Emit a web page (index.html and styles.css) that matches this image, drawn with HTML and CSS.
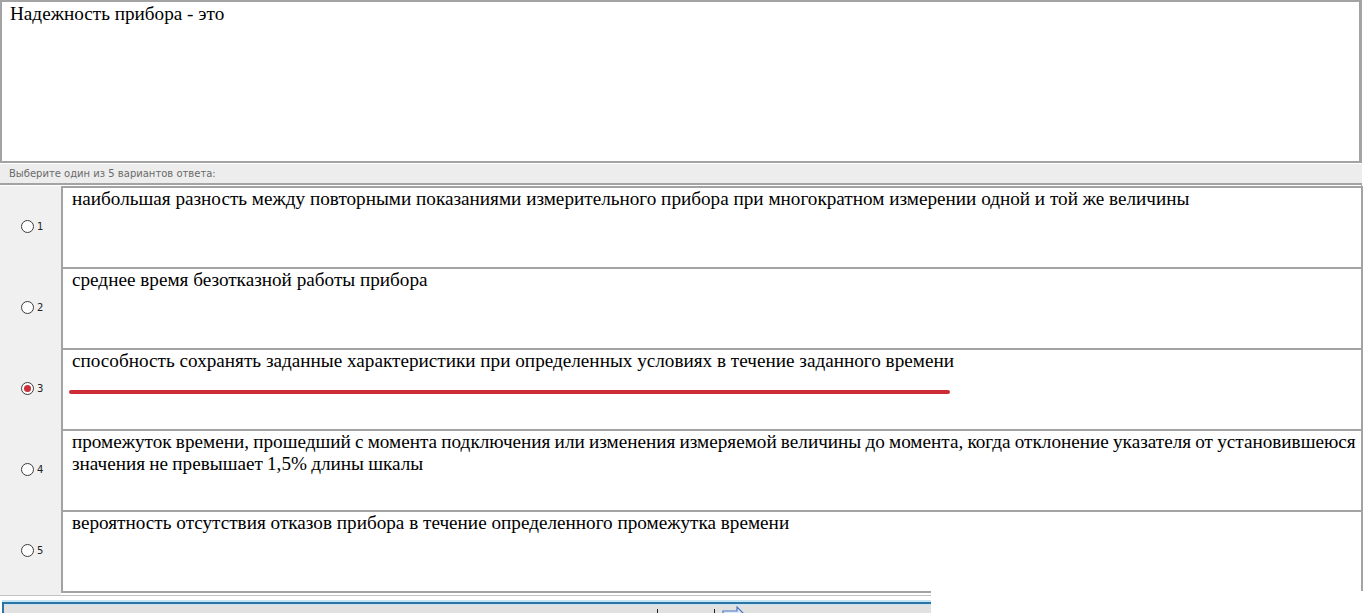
FILE: index.html
```html
<!DOCTYPE html>
<html lang="ru">
<head>
<meta charset="UTF-8" />
<title>Тест</title>
<link rel="stylesheet" href="styles.css">
</head>
<body>
<div class="sheet">
  <div class="question">Надежность прибора - это</div>
  <div class="hint">Выберите один из 5 вариантов ответа:</div>

  <div class="answers">
    <div class="answer">
      <label class="choice"><span class="radio"></span>1</label>
      <div class="option">наибольшая разность между повторными показаниями измерительного прибора при многократном измерении одной и той же величины</div>
    </div>
    <div class="answer">
      <label class="choice"><span class="radio"></span>2</label>
      <div class="option">среднее время безотказной работы прибора</div>
    </div>
    <div class="answer">
      <label class="choice"><span class="radio checked"></span>3</label>
      <div class="option">способность сохранять заданные характеристики при определенных условиях в течение заданного времени
        <span class="mark"></span>
      </div>
    </div>
    <div class="answer">
      <label class="choice"><span class="radio"></span>4</label>
      <div class="option tight">промежуток времени, прошедший с момента подключения или изменения измеряемой величины до момента, когда отклонение указателя от установившеюся значения не превышает 1,5% длины шкалы</div>
    </div>
    <div class="answer">
      <label class="choice"><span class="radio"></span>5</label>
      <div class="option">вероятность отсутствия отказов прибора в течение определенного промежутка времени</div>
    </div>
  </div>
</div>

<!-- bottom panel with navigation buttons -->
<div class="footer">
  <div class="footer-edge"><span class="edge-gap"></span><span class="edge-line"></span></div>
  <div class="footer-rule"></div>
  <div class="toolbar">
    <span class="tb-tick first"></span>
    <span class="tb-tick"></span>
    <svg class="tb-next" width="24" height="16" viewBox="0 0 24 16">
      <path d="M1 5 H15 V1 L22 8 L15 15 V11 H1 Z" fill="#dfe9f7" stroke="#4b78c2" stroke-width="1.2"/>
    </svg>
  </div>
</div>
</body>
</html>
```

FILE: styles.css
```css
/* --- BASE --- */
*, *::before, *::after {
  box-sizing: border-box;
}
body {
  margin: 0;
  background: #fff;
  color: #000;
  font-family: "Liberation Serif", "Times New Roman", serif;
  overflow: hidden;
}

/* --- SHEET --- */
.sheet {
  width: 1364px;
  border-right: 2px solid #fff;
  box-shadow: inset -1px 0 0 #a6a6a6;
}

/* question text */
.question {
  height: 163px;
  width: 1361px;
  border: 2px solid #a3a3a3;
  padding: 1px 8px;
  font-size: 19.2px;
}

/* small hint line */
.hint {
  height: 22px;
  width: 1362px;
  border-top: 1px solid #fff;
  border-bottom: 2px solid #a3a3a3;
  background: #ededed;
  padding-left: 9px;
  font-family: "DejaVu Sans", Tahoma, sans-serif;
  font-size: 10px;
  line-height: 19px;
  color: #6a6a6a;
}

/* --- ANSWERS --- */
.answers {
  width: 1363px;
  padding-top: 1px;
}
.answer {
  display: flex;
  height: 81px;
}
.choice {
  width: 61px;
  flex: none;
  display: flex;
  align-items: center;
  padding-left: 21px;
  background: #f0f0f0;
  font-family: "DejaVu Sans", Tahoma, sans-serif;
  font-size: 10px;
  color: #222;
}
.radio {
  width: 13px;
  height: 13px;
  margin-right: 3px;
  border: 1px solid #3c3c3c;
  border-radius: 50%;
  background: #fff;
  display: flex;
  align-items: center;
  justify-content: center;
}
.radio.checked::after {
  content: "";
  width: 7px;
  height: 7px;
  border-radius: 50%;
  background: #c9303a;
}
.option {
  position: relative;
  flex: 1;
  background: #fff;
  border: 2px solid #a3a3a3;
  border-bottom: none;
  padding: 0 0 0 9px;
  font-size: 19.2px;
  line-height: 22px;
}
.option.tight {
  word-spacing: -0.6px;
}
/* red underline drawn over the chosen answer */
.mark {
  position: absolute;
  left: 6px;
  top: 40px;
  width: 881px;
  height: 4px;
  border-radius: 2px;
  background: #cd2b36;
}

/* --- FOOTER --- */
.footer {
  width: 931px;
}
.footer-edge {
  display: flex;
  height: 4px;
}
.edge-gap {
  width: 61px;
  background: #f0f0f0;
}
.edge-line {
  flex: 1;
  border-top: 2px solid #a3a3a3;
}
.footer-rule {
  height: 1px;
  background: #c2c2c2;
}
.toolbar {
  display: flex;
  align-items: flex-start;
  height: 24px;
  margin: 6px 0 0 2px;
  border-top: 2px solid #2b74a4;
  border-left: 2px solid #2b74a4;
  box-shadow: 0 -2px 0 #c4e4f4, inset 0 1px 0 #c4e4f4;
  background: #e1e1e1;
}
.tb-tick {
  width: 1px;
  height: 8px;
  margin-top: 5px;
  margin-left: 56px;
  background: #222;
}
.tb-tick.first {
  margin-left: 653px;
}
.tb-next {
  margin-left: 7px;
  margin-top: 2px;
}
```
